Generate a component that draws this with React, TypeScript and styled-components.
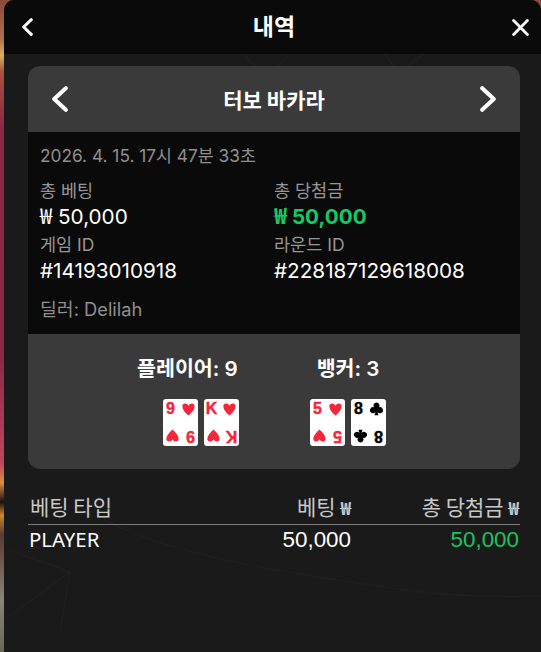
import React from "react";
import styled, { createGlobalStyle } from "styled-components";

const Global = createGlobalStyle`
  html, body { margin: 0; padding: 0; background: #1a1919; }
  #root { width: 541px; height: 652px; overflow: hidden; }
`;

const KR = `Inter, "Noto Sans CJK KR", sans-serif`;

const Page = styled.div`
  width: 541px;
  height: 652px;
  overflow: hidden;
  background: linear-gradient(
    180deg,
    #8a4a38 0%,
    #b0704a 6%,
    #d9b060 8.5%,
    #a8503f 11%,
    #8a2844 20%,
    #8c2a46 55%,
    #c0455e 71%,
    #d89040 74%,
    #1a0f0c 77%,
    #c98a2c 79%,
    #5a3a34 82%,
    #8a8378 92%,
    #6a6658 100%
  );
  display: flex;
  padding-left: 4px;
  box-sizing: border-box;
  font-family: ${KR};
  color: #fff;
`;

const Panel = styled.div`
  position: relative;
  flex: 1;
  background: #1b1a1a;
  border-radius: 10px 10px 0 0;
  display: flex;
  flex-direction: column;
  overflow: hidden;
`;

const Decoration = styled.svg`
  position: absolute;
  left: 0;
  top: 0;
  pointer-events: none;
`;

const Header = styled.header`
  position: relative;
  height: 54px;
  flex: none;
  background: #0a0a0a;
  display: flex;
  align-items: center;
  justify-content: space-between;
  padding: 0 12px 0 18px;
`;

const HeaderTitle = styled.h1`
  margin: 0;
  padding-left: 3px;
  font-size: 23px;
  font-weight: 700;
  line-height: 54px;
`;

const IconButton = styled.span`
  display: flex;
  align-items: center;
  justify-content: center;
`;

const Body = styled.main`
  position: relative;
  padding: 12px 21px 0 24px;
  display: flex;
  flex-direction: column;
`;

const Card = styled.section`
  border-radius: 12px;
  overflow: hidden;
  background: #3a3a3a;
`;

const CardNav = styled.div`
  height: 66px;
  display: flex;
  align-items: center;
  justify-content: space-between;
  padding: 0 24px;
`;

const CardTitle = styled.h2`
  margin: 0;
  font-size: 21px;
  font-weight: 700;
`;

const Details = styled.div`
  background: #0a0a0a;
  padding: 12px 12px 0;
  height: 202px;
  box-sizing: border-box;
`;

const DateLine = styled.div`
  font-size: 17.3px;
  line-height: 24px;
  color: #8f8f8f;
`;

const DetailGrid = styled.div`
  margin-top: 10px;
  display: grid;
  grid-template-columns: 234px 1fr;
`;

const Label = styled.div`
  font-size: 17.5px;
  line-height: 26px;
  color: #969696;
`;

const Value = styled.div<{ $win?: boolean }>`
  font-size: 20.7px;
  line-height: 26px;
  margin-bottom: 2px;
  font-weight: ${(p) => (p.$win ? 700 : 400)};
  color: ${(p) => (p.$win ? "#17c964" : "#fff")};
`;

const Won = styled.span`
  font-family: "Noto Sans CJK KR", sans-serif;
  font-size: 22px;
  line-height: 0;
`;

const Dealer = styled.div`
  margin-top: 10px;
  font-size: 18.3px;
  line-height: 26px;
  color: #8f8f8f;
`;

const Hands = styled.div`
  height: 135px;
  box-sizing: border-box;
  padding-top: 22px;
  display: flex;
`;

const Hand = styled.div<{ $left: number; $width: number }>`
  margin-left: ${(p) => p.$left}px;
  width: ${(p) => p.$width}px;
  display: flex;
  flex-direction: column;
  align-items: flex-end;
`;

const HandLabel = styled.div<{ $centered?: boolean }>`
  align-self: ${(p) => (p.$centered ? "center" : "flex-start")};
  font-size: 20.6px;
  font-weight: 600;
  line-height: 26px;
  white-space: nowrap;
`;

const Cards = styled.div`
  margin-top: 17px;
  display: flex;
  gap: 6px;
`;

const BetTable = styled.div`
  margin-top: 20px;
  display: grid;
  grid-template-columns: 153px 171px 1fr;
  font-family: "Noto Sans CJK KR", "Noto Sans", sans-serif;
`;

const Head = styled.div<{ $end?: boolean }>`
  height: 35px;
  line-height: 35px;
  font-size: 21px;
  color: #c8c8c8;
  border-bottom: 1px solid #7b7b7b;
  text-align: ${(p) => (p.$end ? "right" : "left")};
  padding: ${(p) => (p.$end ? "0 1px 0 0" : "0 0 0 2px")};
  white-space: nowrap;
`;

const HeadWon = styled.span`
  font-size: 18px;
  font-weight: 700;
`;

const Cell = styled.div<{ $end?: boolean; $win?: boolean }>`
  font-family: ${(p) => (p.$end ? `"Liberation Sans", sans-serif` : `"Noto Sans", sans-serif`)};
  height: 30px;
  line-height: ${(p) => (p.$end ? "30px" : "28px")};
  font-size: ${(p) => (p.$end ? "22.4px" : "20.4px")};
  color: ${(p) => (p.$win ? "#1cc25e" : "#fff")};
  text-align: ${(p) => (p.$end ? "right" : "left")};
  padding: ${(p) => (p.$end ? "0 1px 0 0" : "0 0 0 1px")};
`;

const Chevron = ({ dir, w, h, sw }: { dir: "l" | "r"; w: number; h: number; sw: number }) => {
  const m = sw / 2 + 0.2;
  const d =
    dir === "l"
      ? `M${w - m} ${m} L${m} ${h / 2} L${w - m} ${h - m}`
      : `M${m} ${m} L${w - m} ${h / 2} L${m} ${h - m}`;
  return (
    <svg width={w} height={h} viewBox={`0 0 ${w} ${h}`} fill="none" stroke="#fff" strokeWidth={sw} strokeLinecap="round" strokeLinejoin="round">
      <path d={d} />
    </svg>
  );
};

const Close = () => (
  <svg width="17" height="17" viewBox="0 0 17 17" fill="none" stroke="#fff" strokeWidth="2.8" strokeLinecap="round">
    <path d="M1.6 1.6 L15.4 15.4 M15.4 1.6 L1.6 15.4" />
  </svg>
);

const RED = "#f5263c";
const SUITS: Record<string, string> = {
  heart: "M0 5.8 C-7 0 -6.4 -5 -3.1 -5 C-1.4 -5 -.4 -3.8 0 -3 C.4 -3.8 1.4 -5 3.1 -5 C6.4 -5 7 0 0 5.8Z",
  club: "M0 -5.8 A2.7 2.7 0 0 1 2.2 -1.5 A2.7 2.7 0 1 1 .9 2.6 L1.8 5.6 L-1.8 5.6 L-.9 2.6 A2.7 2.7 0 1 1 -2.2 -1.5 A2.7 2.7 0 0 1 0 -5.8Z",
};

const CardCorner = ({ rank, suit, color }: { rank: string; suit: string; color: string }) => (
  <>
    <text x="7.5" y="15" textAnchor="middle" fontFamily="'Liberation Sans', sans-serif" fontWeight="700" fontSize="16" stroke={color} strokeWidth="0.4" fill={color}>{rank}</text>
    <path d={SUITS[suit]} fill={color} transform="translate(25.5 10) scale(1.12)" />
  </>
);

const PlayingCard = ({ rank, suit, color }: { rank: string; suit: string; color: string }) => (
  <svg width="35" height="47" viewBox="0 0 35 47">
    <rect width="35" height="47" rx="3" fill="#fff" />
    <CardCorner rank={rank} suit={suit} color={color} />
    <g transform="rotate(180 17.5 23.5)">
      <CardCorner rank={rank} suit={suit} color={color} />
    </g>
  </svg>
);

export default function App() {
  return (
    <Page>
      <Global />
      <Panel>
        <Decoration width="537" height="652" viewBox="0 0 537 652" fill="none" stroke="#211f1d" strokeWidth="1.5">
          <path d="M100 520 C 180 560 300 575 400 590 C 450 597 500 597 537 596" />
          <path d="M0 620 L66 572 L6 550 M66 572 L56 630" />
          <path d="M240 54 L262 78 L285 54 M380 54 L395 72 L420 54" />
        </Decoration>
        <Header>
          <IconButton><Chevron dir="l" w={11} h={18} sw={3} /></IconButton>
          <HeaderTitle>내역</HeaderTitle>
          <IconButton><Close /></IconButton>
        </Header>
        <Body>
          <Card>
            <CardNav>
              <IconButton><Chevron dir="l" w={16} h={26} sw={4} /></IconButton>
              <CardTitle>터보 바카라</CardTitle>
              <IconButton><Chevron dir="r" w={16} h={26} sw={4} /></IconButton>
            </CardNav>
            <Details>
              <DateLine>2026. 4. 15. 17시 47분 33초</DateLine>
              <DetailGrid>
                <div>
                  <Label>총 베팅</Label>
                  <Value><Won>₩</Won> 50,000</Value>
                  <Label>게임 ID</Label>
                  <Value>#14193010918</Value>
                </div>
                <div>
                  <Label>총 당첨금</Label>
                  <Value $win><Won>₩</Won> 50,000</Value>
                  <Label>라운드 ID</Label>
                  <Value>#228187129618008</Value>
                </div>
              </DetailGrid>
              <Dealer>딜러: Delilah</Dealer>
            </Details>
            <Hands>
              <Hand $left={109} $width={102}>
                <HandLabel>플레이어: 9</HandLabel>
                <Cards>
                  <PlayingCard rank="9" suit="heart" color={RED} />
                  <PlayingCard rank="K" suit="heart" color={RED} />
                </Cards>
              </Hand>
              <Hand $left={71} $width={76}>
                <HandLabel $centered>뱅커: 3</HandLabel>
                <Cards>
                  <PlayingCard rank="5" suit="heart" color={RED} />
                  <PlayingCard rank="8" suit="club" color="#000" />
                </Cards>
              </Hand>
            </Hands>
          </Card>
          <BetTable>
            <Head>베팅 타입</Head>
            <Head $end>베팅 <HeadWon>₩</HeadWon></Head>
            <Head $end>총 당첨금 <HeadWon>₩</HeadWon></Head>
            <Cell>PLAYER</Cell>
            <Cell $end>50,000</Cell>
            <Cell $end $win>50,000</Cell>
          </BetTable>
        </Body>
      </Panel>
    </Page>
  );
}
